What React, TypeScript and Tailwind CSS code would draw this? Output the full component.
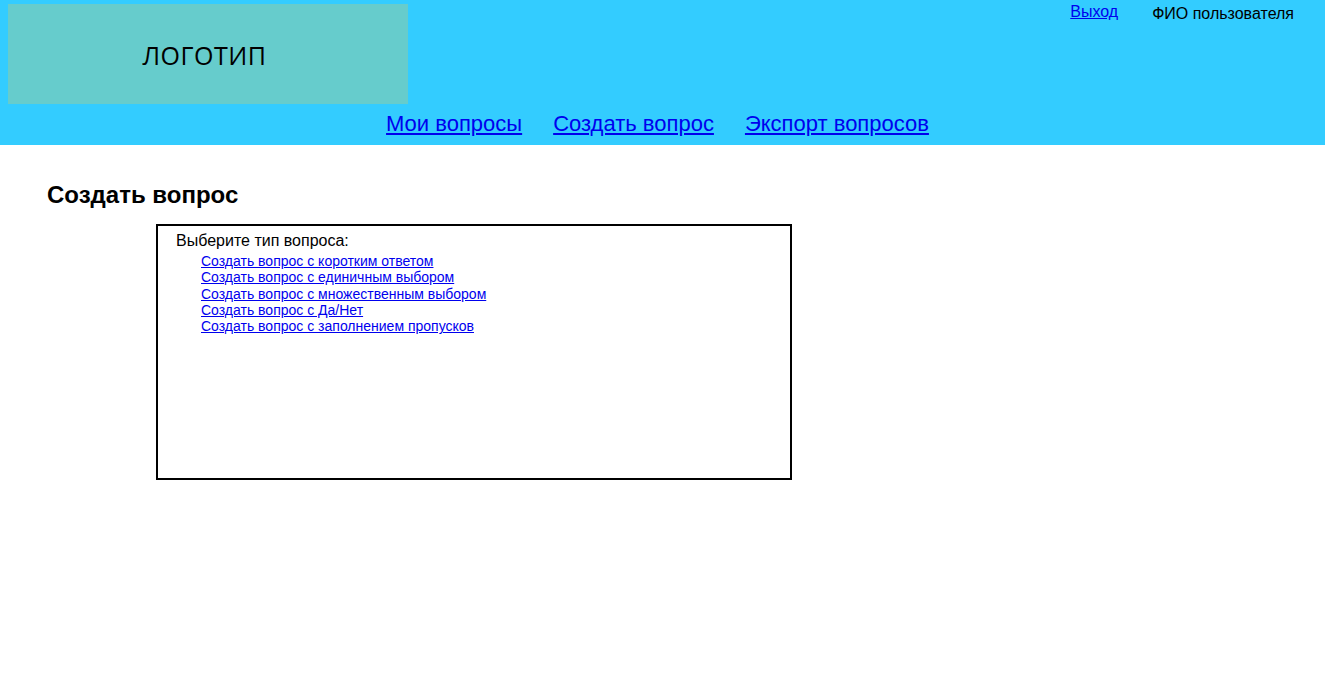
export default function App() {
  const links = [
    "Создать вопрос с коротким ответом",
    "Создать вопрос с единичным выбором",
    "Создать вопрос с множественным выбором",
    "Создать вопрос с Да/Нет",
    "Создать вопрос с заполнением пропусков",
  ];
  return (
    <div className="min-h-[695px] bg-white text-black" style={{ fontFamily: '"Liberation Sans", Arial, sans-serif' }}>
      <header className="bg-[#33ccff] h-[145px] flex flex-col">
        <div className="flex justify-between">
          <div className="ml-2 mt-1 w-[400px] h-[100px] bg-[#66cccc] flex items-center justify-center pt-[4px] pr-[7px]">
            <span className="text-[25px] tracking-[0.5px]" style={{ fontFamily: '"Open Sans", sans-serif' }}>ЛОГОТИП</span>
          </div>
          <div className="flex items-start pt-[3px] mr-[31px] text-[16px] leading-[18px]">
            <a href="#" className="text-[#0000ee] underline">Выход</a>
            <span className="ml-[34px] mt-[2px]">ФИО пользователя</span>
          </div>
        </div>
        <nav className="flex justify-center gap-[31px] mt-[7px] text-[22px] leading-[26px] pr-[10px]">
          <a href="#" className="text-[#0000ee] underline">Мои вопросы</a>
          <a href="#" className="text-[#0000ee] underline">Создать вопрос</a>
          <a href="#" className="text-[#0000ee] underline">Экспорт вопросов</a>
        </nav>
      </header>
      <main className="pl-[47px] pt-[36px]">
        <h1 className="text-[24px] font-bold leading-[28px]">Создать вопрос</h1>
        <div className="ml-[109px] mt-[15px] w-[636px] h-[256px] border-2 border-black pl-[18px] pt-[6px]">
          <div className="text-[16px] leading-[18px]">Выберите тип вопроса:</div>
          <div className="pl-[25px] mt-[3px] flex flex-col text-[14px] leading-[16.3px]">
            {links.map((l) => (
              <a key={l} href="#" className="text-[#0000ee] underline">{l}</a>
            ))}
          </div>
        </div>
      </main>
    </div>
  );
}
